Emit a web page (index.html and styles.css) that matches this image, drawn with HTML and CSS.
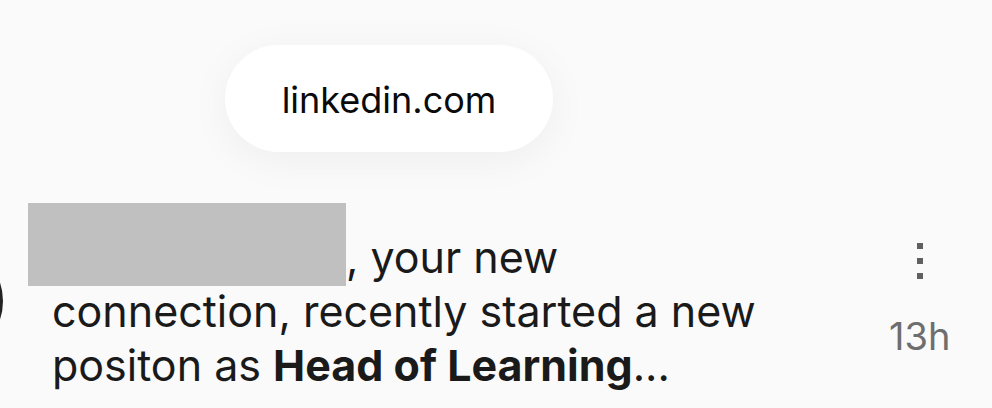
FILE: index.html
```html
<!DOCTYPE html>
<html>
<head>
<meta charset="utf-8">
<link rel="stylesheet" href="styles.css">
</head>
<body>
<div class="page">
  <div class="top">
    <div class="pill">linkedin.com</div>
  </div>
  <div class="row">
    <div class="avatar"></div>
    <div class="message">
      <span class="redact"></span>
      <p class="text"><span class="name-gap"></span>, your new<br>connection, recently started a new<br>positon as <b>Head of Learning</b>...</p>
    </div>
    <div class="meta">
      <div class="dots"><i></i><i></i><i></i></div>
      <div class="time">13h</div>
    </div>
  </div>
</div>
</body>
</html>
```

FILE: styles.css
```css
html, body {
  margin: 0;
  padding: 0;
  background: #fafafa;
}
.page {
  width: 992px;
  height: 408px;
  overflow: hidden;
  position: relative;
  font-family: Inter, "Noto Sans", sans-serif;
}
.top {
  padding-top: 45px;
  padding-left: 225px;
}
.pill {
  width: 328px;
  height: 107px;
  border-radius: 54px;
  background: #ffffff;
  box-shadow: 0 8px 40px rgba(0, 0, 0, 0.05);
  display: flex;
  align-items: center;
  justify-content: center;
  font-size: 36px;
  color: #0a0a0a;
  padding-top: 2px;
  box-sizing: border-box;
}
.row {
  display: flex;
  margin-top: 51px;
  position: relative;
}
.avatar {
  position: absolute;
  left: -109px;
  top: 42px;
  width: 112px;
  height: 112px;
  border-radius: 50%;
  border: 3px solid #222;
  box-sizing: border-box;
}
.message {
  position: relative;
  padding-left: 52px;
  flex: 1;
}
.redact {
  position: absolute;
  left: 28px;
  top: 0;
  width: 318px;
  height: 83px;
  background: #c0c0c0;
}
.text {
  margin: 0;
  padding-top: 27px;
  font-size: 43px;
  line-height: 54px;
  color: #1a1a1a;
}
.text b {
  font-weight: 700;
}
.name-gap {
  display: inline-block;
  width: 294px;
}
.meta {
  width: 103px;
  display: flex;
  flex-direction: column;
  align-items: flex-start;
  padding-top: 40px;
}
.dots {
  display: flex;
  flex-direction: column;
  gap: 9px;
  margin-left: 28px;
}
.dots i {
  display: block;
  width: 6px;
  height: 6px;
  background: #606060;
}
.time {
  margin-top: 34px;
  font-size: 38px;
  color: #6e6e6e;
}
```
